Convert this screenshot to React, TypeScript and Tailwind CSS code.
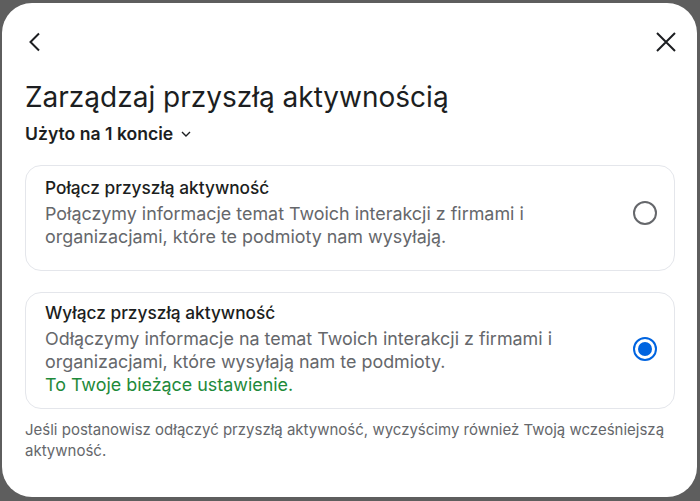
import React from 'react'

// Ustawienia przyszłej aktywności – modal
const FONT = 'font-["Inter","Noto_Sans",sans-serif]'

function Radio({ checked }: { checked: boolean }) {
  if (checked) {
    return (
      <span className="flex h-6 w-6 shrink-0 items-center justify-center rounded-full border-2 border-[#0064e0]">
        <span className="h-[14px] w-[14px] rounded-full bg-[#0064e0]" />
      </span>
    )
  }
  return <span className="h-6 w-6 shrink-0 rounded-full border-2 border-[#65676b]" />
}

interface OptionProps {
  title: string
  desc: string
  note?: string
  checked: boolean
  className?: string
}

function Option({ title, desc, note, checked, className }: OptionProps) {
  return (
    <div className={`flex items-center gap-4 rounded-2xl border border-[#e4e6eb] pl-[19px] pr-[17px] ${className ?? ''}`}>
      <div className="flex-1">
        <div className="text-[17.3px] leading-[22px] font-medium text-[#1c1e21]">{title}</div>
        <div className="mt-[3px] text-[17.9px] leading-[23px] text-[#65676b]">{desc}</div>
        {note && <div className="text-[17.9px] leading-[23px] text-[#1e8a3a]">{note}</div>}
      </div>
      <Radio checked={checked} />
    </div>
  )
}

export default function App() {
  return (
    <div className={`h-[501px] w-[700px] bg-[#5e5e5e] pt-[3px] pl-[2px] pr-[3px] pb-[4px] ${FONT}`}>
      <div className="flex h-full flex-col rounded-[30px] bg-white pl-[23px] pr-[22px]">
        {/* Nagłówek */}
        <div className="flex items-center justify-between pt-[28px]">
          <svg width="14" height="20" viewBox="0 0 14 20" className="ml-[2px]" fill="none">
            <path d="M12 1.5 3.5 10l8.5 8.5" stroke="#1c1e21" strokeWidth="2" />
          </svg>
          <svg width="22" height="22" viewBox="0 0 22 22" className="mr-[-2px]" fill="none">
            <path d="M2 2l18 18M20 2 2 20" stroke="#1c1e21" strokeWidth="2" />
          </svg>
        </div>

        <h1 className="mt-[27px] text-[28px] leading-[34px] font-normal text-[#1c1e21]">
          Zarządzaj przyszłą aktywnością
        </h1>
        <div className="mt-[9px] flex items-center gap-[8px] text-[17.6px] leading-[22px] font-semibold text-[#1c1e21]">
          Użyto na 1 koncie
          <svg width="10" height="6" viewBox="0 0 10 6" fill="none">
            <path d="M1 1l4 4 4-4" stroke="#1c1e21" strokeWidth="1.4" />
          </svg>
        </div>

        {/* Opcje */}
        <div className="mt-[20px] flex flex-col gap-[21px]">
          <Option
            className="pt-[11px] pb-[22px]"
            title="Połącz przyszłą aktywność"
            desc="Połączymy informacje temat Twoich interakcji z firmami i organizacjami, które te podmioty nam wysyłają."
            checked={false}
          />
          <Option
            className="pt-[9px] pb-[12px]"
            title="Wyłącz przyszłą aktywność"
            desc="Odłączymy informacje na temat Twoich interakcji z firmami i organizacjami, które wysyłają nam te podmioty."
            note="To Twoje bieżące ustawienie."
            checked
          />
        </div>

        <p className="mt-[10px] text-[15px] leading-[21px] text-[#65676b]">
          Jeśli postanowisz odłączyć przyszłą aktywność, wyczyścimy również Twoją wcześniejszą aktywność.
        </p>
      </div>
    </div>
  )
}
